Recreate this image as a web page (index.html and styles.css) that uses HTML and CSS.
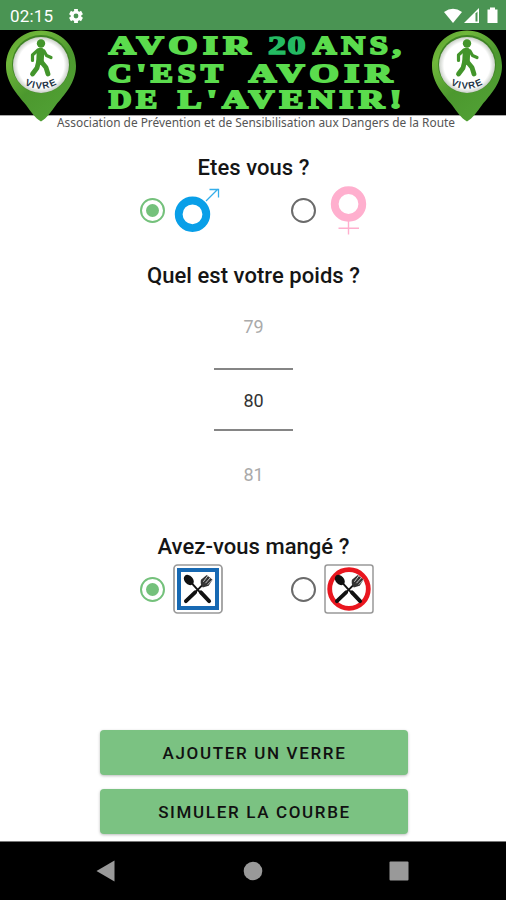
FILE: index.html
```
<!DOCTYPE html>
<html lang="fr">
<head>
<meta charset="utf-8">
<title>Avoir 20 ans</title>
<link rel="stylesheet" href="styles.css">
</head>
<body>
<svg class="defs" width="0" height="0">
  <defs>
    <linearGradient id="pinGreen" x1="0" y1="0" x2="0.7" y2="1">
      <stop offset="0" stop-color="#559d2c"/><stop offset="0.25" stop-color="#70b73b"/><stop offset="0.6" stop-color="#4c982e"/><stop offset="1" stop-color="#51a135"/>
    </linearGradient>
    <radialGradient id="disc"><stop offset="0.82" stop-color="#fff"/><stop offset="1" stop-color="#c9cfc7"/></radialGradient>
    <path id="arc" d="M24.500 54.500Q41 64 60 52.500"/>
    <symbol id="pin" viewBox="0 0 82 92">
      <path d="M41 .5C61 .5 76 16 76 36C76 53 64 65 56 75C51 82 47 88 41 91.5C35 88 31 82 26 75C18 65 6 53 6 36C6 16 21 .5 41 .5Z" fill="url(#pinGreen)"/>
      <circle cx="41" cy="34" r="29" fill="#3f8425"/>
      <circle cx="41" cy="35" r="28" fill="url(#disc)"/>
      <circle cx="41" cy="13.500" r="4.200" fill="#43952b"/>
      <g fill="none" stroke="#43952b" stroke-linecap="round" stroke-linejoin="round">
        <path d="M40.500 21.500L40 31" stroke-width="7.5"/>
        <path d="M38 20L32.500 25V30.500M44 21L46.500 25.500L51 27.500" stroke-width="3.200"/>
        <path d="M38.500 32L37 38L32.500 44M41.500 32L46 37.500L48 44" stroke-width="4.800"/>
      </g>
      <text class="pin-label" textLength="35"><textPath href="#arc">VIVRE</textPath></text>
    </symbol>
    <symbol id="cutlery" viewBox="0 0 32 32">
      <ellipse cx="6.5" cy="6.2" rx="4.3" ry="6" transform="rotate(-42 6.5 6.2)" fill="#111"/>
      <path d="M9 9L20 21" stroke="#111" stroke-width="2"/>
      <path d="M19 19L27.5 28" stroke="#111" stroke-width="4" stroke-linecap="round"/>
      <path d="M22 10L12 20" stroke="#111" stroke-width="2"/>
      <path d="M13 19L3.5 28" stroke="#111" stroke-width="4" stroke-linecap="round"/>
      <path d="M19 6L25 1L31 6L27 12L21 14Q18 11 19 6Z" fill="#333"/>
      <path d="M21.5 8L26 2M23.7 9.5L29 3.5M26 11L31.5 5.5" stroke="#ddd" stroke-width=".9"/>
    </symbol>
  </defs>
</svg>
<div class="screen">
  <div class="status">
    <span class="clock">02:15</span>
    <svg class="gear" width="16" height="16" viewBox="0 0 16 16"><path d="M8 1V15M2 4.5L14 11.5M14 4.5L2 11.5" stroke="#fff" stroke-width="3.8"/><circle cx="8" cy="8" r="5.4" fill="#fff"/><circle cx="8" cy="8" r="2.4" fill="#4a9453"/></svg>
    <svg class="signals" width="56" height="18" viewBox="0 0 56 18">
      <path d="M0 5Q9 -1.5 18 5L9 16Z" fill="#fff"/>
      <path d="M20 16L35 1V16Z" fill="#fff"/><path d="M31.5 6.5V14.5H33.5V4.5Z" fill="#4a9453"/>
      <path d="M43.500 2.500H46V.500H51V2.500H53.500V16H43.500Z" fill="#fff"/>
    </svg>
  </div>
  <svg class="banner" width="506" height="102" viewBox="0 30 506 102">
    <path d="M0 30H506V115H0Z"/>
    <path d="M0 115.500H506" stroke="#aaa"/>
    <g class="slogan">
      <text x="109" y="54.300" textLength="147" lengthAdjust="spacingAndGlyphs">AVOIR</text>
      <text class="twenty" x="268" y="54.300" textLength="39" lengthAdjust="spacingAndGlyphs">20</text>
      <text x="313" y="54.300" textLength="93" lengthAdjust="spacingAndGlyphs">ANS,</text>
      <text x="108" y="81.500" textLength="120" lengthAdjust="spacingAndGlyphs">C'EST</text>
      <text x="249" y="81.500" textLength="149" lengthAdjust="spacingAndGlyphs">AVOIR</text>
      <text x="109" y="108.200" textLength="53" lengthAdjust="spacingAndGlyphs">DE</text>
      <text x="178" y="108.200" textLength="229" lengthAdjust="spacingAndGlyphs">L'AVENIR!</text>
    </g>
    <text class="subtitle" x="57" y="127" textLength="398" lengthAdjust="spacingAndGlyphs">Association de Prévention et de Sensibilisation aux Dangers de la Route</text>
    <use href="#pin" x="0" y="30" width="82" height="92"/>
    <use href="#pin" x="426" y="30" width="82" height="92"/>
  </svg>
  <main class="form">
    <h2>Etes vous ?</h2>
    <div class="choices gender">
      <div class="choice"><span class="radio on"></span>
        <svg width="50" height="50" viewBox="173 185 50 50"><circle cx="192.500" cy="214.300" r="13.800" fill="none" stroke="#099fe8" stroke-width="7.800"/><path d="M206 201L218 189M209.500 189.500H218.500V197.500" fill="none" stroke="#35aeea" stroke-width="1.300"/></svg>
      </div>
      <div class="choice"><span class="radio"></span>
        <svg width="50" height="50" viewBox="324.500 185 50 50"><circle cx="349" cy="204" r="13.800" fill="none" stroke="#ffafce" stroke-width="7.800"/><path d="M349 221V234.500M339 228.300H359.500" stroke="#ffafce" stroke-width="1.400"/></svg>
      </div>
    </div>
    <h2>Quel est votre poids ?</h2>
    <div class="picker">
      <span class="near">79</span>
      <span class="current">80</span>
      <span class="near">81</span>
    </div>
    <h2>Avez-vous mangé ?</h2>
    <div class="choices">
      <div class="choice"><span class="radio on"></span>
        <svg width="50" height="50" viewBox="0 0 50 50"><rect x="1" y="1" width="48" height="48" rx="3.500" fill="#fff" stroke="#999" stroke-width="1.700"/><rect x="6" y="6" width="38" height="38" fill="none" stroke="#1769b3" stroke-width="4"/><use href="#cutlery" x="9.500" y="10" width="31" height="31"/></svg>
      </div>
      <div class="choice"><span class="radio"></span>
        <svg width="50" height="50" viewBox="0 0 50 50"><rect x="1" y="1" width="48" height="48" rx="2.500" fill="#fff" stroke="#999" stroke-width="1.500"/><circle cx="25" cy="25" r="19.300" fill="none" stroke="#e9161f" stroke-width="4.800"/><use href="#cutlery" x="9.500" y="10" width="31" height="31"/></svg>
      </div>
    </div>
    <div class="actions">
      <button>AJOUTER UN VERRE</button>
      <button>SIMULER LA COURBE</button>
    </div>
  </main>
  <nav class="navbar">
    <svg width="20" height="22" viewBox="0 0 20 22"><path d="M.5 11L18.500 .5V21.500Z" fill="#999"/></svg>
    <svg width="20" height="20" viewBox="0 0 20 20"><circle cx="10" cy="10" r="9.300" fill="#999"/></svg>
    <svg width="20" height="20" viewBox="0 0 20 20"><rect x=".5" y=".5" width="19" height="19" rx="1" fill="#999"/></svg>
  </nav>
</div>
</body>
</html>
```
FILE: styles.css
```
* { box-sizing: border-box; }
body { margin: 0; background: #fff; font-family: Roboto, sans-serif; color: #151515; }
.defs { position: absolute; }
.screen { width: 506px; height: 900px; display: flex; flex-direction: column; overflow: hidden; }
.status { height: 30px; flex: none; background: #4a9453; display: flex; align-items: center; padding: 1px 6px 0 10px; color: #fff; }
.clock { font-size: 17px; letter-spacing: .2px; width: 58px; }
.signals { margin-left: auto; }
.banner { display: block; flex: none; }
.slogan { font: bold 25.5px "Liberation Serif", serif; letter-spacing: 4px; fill: #5bdc4d; stroke: #5bdc4d; stroke-width: 2px; }
.slogan .twenty { fill: #24ba62; stroke: #24ba62; stroke-width: 1.4px; letter-spacing: 1px; }
.subtitle { font: 12px "Noto Sans", sans-serif; fill: #555; }
.pin-label { font: bold 9.5px "Liberation Sans", sans-serif; fill: #234; letter-spacing: 1.2px; }
.form { flex: 1; display: flex; flex-direction: column; align-items: center; padding: 22px 0 0 1px; }
h2 { margin: 0; font-size: 22px; font-weight: 500; line-height: 28px; letter-spacing: .05px; }
.choices { display: grid; grid-template-columns: 151.5px 82px; height: 50px; margin-top: 3px; margin-left: 6px; }
.choice { display: flex; align-items: center; gap: 8px; }
.choices svg { flex: none; display: block; }
.gender { margin-bottom: 27px; }
.radio { width: 25px; height: 25px; flex: none; border: 2px solid #6b6b6b; border-radius: 50%; display: grid; place-items: center; }
.radio.on { border-color: #74c17b; }
.radio.on::after { content: ""; width: 13px; height: 13px; border-radius: 50%; background: #74c17b; }
.picker { width: 79px; height: 243px; display: flex; flex-direction: column; align-items: center; padding-top: 23px; font-size: 18px; line-height: 28px; text-align: center; }
.near { color: #aaa; height: 55px; }
.current { width: 79px; height: 63px; line-height: 61px; border-top: 2px solid #858585; border-bottom: 2px solid #858585; color: #333; margin-bottom: 30px; }
.actions { margin-top: auto; padding-bottom: 7px; display: grid; gap: 14px; }
button { width: 308px; height: 45px; border: 0; border-radius: 4px; background: #7bc282; color: #111; font: 500 17px Roboto, sans-serif; letter-spacing: 1.65px; padding: 0 0 0 2px; box-shadow: 0 1px 3px #0004; }
.navbar { height: 59px; flex: none; background: #000; border-top: 1px solid #777; display: flex; align-items: center; justify-content: space-between; padding: 0 97px 0 96px; }
```
